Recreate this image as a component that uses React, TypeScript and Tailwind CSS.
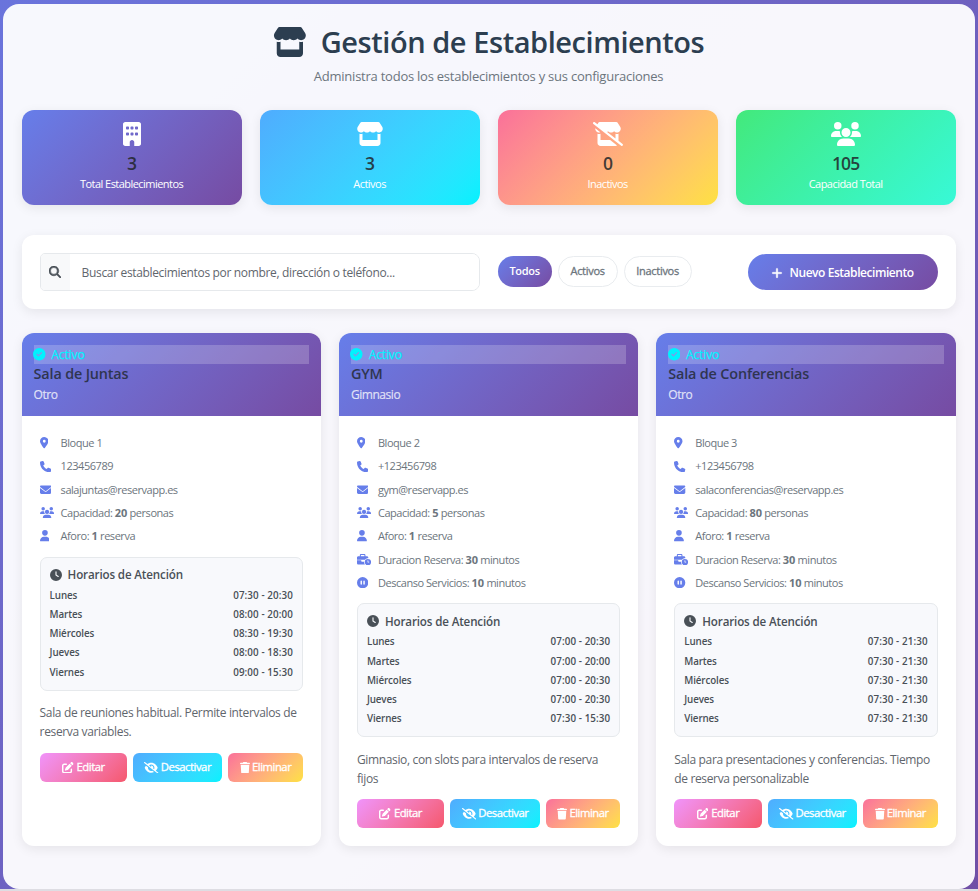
import type { ReactNode } from 'react';
import {
  FaBuilding,
  FaBusinessTime,
  FaCircleCheck,
  FaCirclePause,
  FaClock,
  FaEnvelope,
  FaEyeSlash,
  FaLocationDot,
  FaMagnifyingGlass,
  FaPenToSquare,
  FaPhone,
  FaPlus,
  FaStore,
  FaStoreSlash,
  FaTrash,
  FaUser,
  FaUsers,
} from 'react-icons/fa6';

type Place = {
  name: string;
  kind: string;
  address: string;
  phone: string;
  email: string;
  capacity: number;
  duration?: number;
  rest?: number;
  hours: [string, string][];
  description: string;
};

const places: Place[] = [
  {
    name: 'Sala de Juntas',
    kind: 'Otro',
    address: 'Bloque 1',
    phone: '123456789',
    email: 'salajuntas@reservapp.es',
    capacity: 20,
    hours: [
      ['Lunes', '07:30 - 20:30'],
      ['Martes', '08:00 - 20:00'],
      ['Miércoles', '08:30 - 19:30'],
      ['Jueves', '08:00 - 18:30'],
      ['Viernes', '09:00 - 15:30'],
    ],
    description: 'Sala de reuniones habitual. Permite intervalos de reserva variables.',
  },
  {
    name: 'GYM',
    kind: 'Gimnasio',
    address: 'Bloque 2',
    phone: '+123456798',
    email: 'gym@reservapp.es',
    capacity: 5,
    duration: 30,
    rest: 10,
    hours: [
      ['Lunes', '07:00 - 20:30'],
      ['Martes', '07:00 - 20:00'],
      ['Miércoles', '07:00 - 20:30'],
      ['Jueves', '07:00 - 20:30'],
      ['Viernes', '07:30 - 15:30'],
    ],
    description: 'Gimnasio, con slots para intervalos de reserva fijos',
  },
  {
    name: 'Sala de Conferencias',
    kind: 'Otro',
    address: 'Bloque 3',
    phone: '+123456798',
    email: 'salaconferencias@reservapp.es',
    capacity: 80,
    duration: 30,
    rest: 10,
    hours: [
      ['Lunes', '07:30 - 21:30'],
      ['Martes', '07:30 - 21:30'],
      ['Miércoles', '07:30 - 21:30'],
      ['Jueves', '07:30 - 21:30'],
      ['Viernes', '07:30 - 21:30'],
    ],
    description: 'Sala para presentaciones y conferencias. Tiempo de reserva personalizable',
  },
];

function Stat({ icon, value, label, tone }: { icon: ReactNode; value: string; label: string; tone: string }) {
  return (
    <div className={`flex h-[95px] flex-col items-center rounded-[12px] pt-3 text-white shadow-[0_3px_12px_rgba(0,0,0,0.08)] ${tone}`}>
      <div className="[&>svg]:h-6 [&>svg]:w-[30px]">{icon}</div>
      <div className="mt-[6px] text-[17.5px] font-semibold leading-[22px] tracking-[-0.9px] text-[#212529]/85">{value}</div>
      <div className="mt-[2px] text-[11px] leading-4 tracking-[-0.54px]">{label}</div>
    </div>
  );
}

function Detail({ icon, children }: { icon: ReactNode; children: ReactNode }) {
  return (
    <div className="flex h-[23.3px] items-center">
      <div className="w-[21px] shrink-0 text-[#667eea] [&>svg]:-mt-px [&>svg]:h-[11.3px]">{icon}</div>
      <div className="text-[11px] tracking-[-0.46px] text-[#6c757d] [&>strong]:tracking-[-0.1px]">{children}</div>
    </div>
  );
}

function Card({ place }: { place: Place }) {
  return (
    <article className="overflow-hidden rounded-[12px] bg-white shadow-[0_3px_12px_rgba(0,0,0,0.08)]">
      <header className="h-[83px] bg-linear-135 from-[#667eea] to-[#764ba2] p-3">
        <div className="flex h-[19px] items-center bg-white/20 text-[12px] text-[#00f2fe]">
          <FaCircleCheck className="-ml-[0.5px] text-[12.5px]" />
          <span className="ml-[6px] tracking-[-0.12px] [-webkit-text-stroke:0.25px]">Activo</span>
        </div>
        <h2 className="text-[14.4px] font-semibold leading-[19px] tracking-[-0.16px] text-[#2f3550]">{place.name}</h2>
        <p className="mt-[3px] text-[12px] leading-[18px] tracking-[-0.45px] text-white/75 [-webkit-text-stroke:0.2px]">{place.kind}</p>
      </header>
      <div className="px-[18px] pb-[18px] pt-[15.8px]">
        <Detail icon={<FaLocationDot className="w-[8.5px]" />}>{place.address}</Detail>
        <Detail icon={<FaPhone className="w-[11.3px]" />}>{place.phone}</Detail>
        <Detail icon={<FaEnvelope className="w-[11.3px]" />}>{place.email}</Detail>
        <Detail icon={<FaUsers className="w-[14.1px]" />}>
          Capacidad: <strong>{place.capacity}</strong> personas
        </Detail>
        <Detail icon={<FaUser className="w-[9.9px]" />}>
          Aforo: <strong>1</strong> reserva
        </Detail>
        {place.duration && (
          <Detail icon={<FaBusinessTime className="w-[14.1px]" />}>
            Duracion Reserva: <strong>{place.duration}</strong> minutos
          </Detail>
        )}
        {place.rest && (
          <Detail icon={<FaCirclePause className="w-[11.3px]" />}>
            Descanso Servicios: <strong>{place.rest}</strong> minutos
          </Detail>
        )}
        <section className="mt-[8.4px] h-[134px] rounded-[7px] border border-[#e6e9ec] bg-[#f8f9fc] px-[9px] pt-[8px] text-[#495057]">
          <h3 className="flex h-[18px] items-center font-semibold">
            <FaClock className="text-[12px]" />
            <span className="ml-[6px] text-[11.6px] tracking-[-0.14px]">Horarios de Atención</span>
          </h3>
          <div className="mt-[2.9px]">
            {place.hours.map(([day, time]) => (
              <div key={day} className="flex h-[19.2px] items-center justify-between text-[9.8px] font-semibold">
                <span className="tracking-[-0.12px]">{day}</span>
                <span className="tracking-[0.1px]">{time}</span>
              </div>
            ))}
          </div>
        </section>
        <p className="mt-[12.3px] text-[12px] leading-[19.2px] tracking-[-0.35px] text-[#5f666d]">{place.description}</p>
        <div className="mt-[11.4px] flex h-[29px] gap-[6px] text-[11.3px] tracking-[-0.48px] text-white [-webkit-text-stroke:0.3px] [&_svg]:h-[11.5px] [&_svg]:shrink-0">
          <button className="flex w-[87.5px] items-center justify-center gap-[3px] rounded-[6px] bg-linear-135 from-[#f093fb] to-[#f5576c]">
            <FaPenToSquare className="w-[11.5px]" />
            Editar
          </button>
          <button className="flex flex-1 items-center justify-center gap-[2px] rounded-[6px] bg-linear-135 from-[#4facfe] to-[#00f2fe]">
            <FaEyeSlash className="w-[14.4px]" />
            Desactivar
          </button>
          <button className="flex w-[74.5px] items-center justify-center gap-[2px] rounded-[6px] bg-linear-135 from-[#fa709a] to-[#fee140]">
            <FaTrash className="w-[10px]" />
            Eliminar
          </button>
        </div>
      </div>
    </article>
  );
}

export default function App() {
  return (
    <div className="h-[891px] w-[978px] overflow-hidden border-b-2 border-[#dedde3] bg-linear-135 from-[#6a74dc] to-[#704fa6] px-[3px] pt-1 font-['Open_Sans','Noto_Sans',sans-serif]">
      <main className="h-[885px] rounded-[16px] bg-white/95 pl-[18.6px] pr-[19.4px]">
        <h1 className="flex h-[76px] items-center justify-center gap-[14px] text-[29px] font-semibold tracking-[-0.44px] text-[#2c3e50]">
          <FaStore className="h-[30px] w-[33.75px]" />
          <span>Gestión de Establecimientos</span>
        </h1>
        <p className="-mt-[14px] text-center text-[13px] leading-5 tracking-[-0.24px] text-[#6c757d]">
          Administra todos los establecimientos y sus configuraciones
        </p>
        <div className="mt-6 grid grid-cols-4 gap-[18px]">
          <Stat icon={<FaBuilding />} value="3" label="Total Establecimientos" tone="bg-linear-135 from-[#667eea] to-[#764ba2]" />
          <Stat icon={<FaStore />} value="3" label="Activos" tone="bg-linear-135 from-[#4facfe] to-[#00f2fe]" />
          <Stat icon={<FaStoreSlash />} value="0" label="Inactivos" tone="bg-linear-135 from-[#fa709a] to-[#fee140]" />
          <Stat icon={<FaUsers />} value="105" label="Capacidad Total" tone="bg-linear-135 from-[#43e97b] to-[#38f9d7]" />
        </div>
        <div className="mt-[30px] flex h-[74px] items-center rounded-[12px] bg-white px-[18px] shadow-[0_3px_12px_rgba(0,0,0,0.08)]">
          <div className="flex h-[38px] w-[440px] overflow-hidden rounded-l-[5px] rounded-r-[8px] border border-[#e6e9ec]">
            <div className="flex w-[29px] items-center justify-center bg-[#f8f9fa] text-[12px] text-[#495057]">
              <FaMagnifyingGlass className="-mt-px stroke-current stroke-[24]" />
            </div>
            <input
              className="flex-1 bg-white px-3 pt-[2px] text-[12px] tracking-[-0.34px] outline-none placeholder:text-[#5f666d]"
              placeholder="Buscar establecimientos por nombre, dirección o teléfono..."
            />
          </div>
          <div className="-mt-px ml-[18px] flex h-[31px] gap-[6px] text-[11px] tracking-[-0.3px] text-[#6c757d]">
            <button className="w-[54px] rounded-full bg-linear-135 from-[#667eea] to-[#764ba2] font-semibold text-white">Todos</button>
            <button className="w-[60px] rounded-full border border-[#e9ecef] bg-white [-webkit-text-stroke:0.3px]">Activos</button>
            <button className="w-[68px] rounded-full border border-[#e9ecef] bg-white [-webkit-text-stroke:0.3px]">Inactivos</button>
          </div>
          <button className="ml-auto flex h-9 w-[190px] items-center justify-center gap-[6px] rounded-full bg-linear-135 from-[#667eea] to-[#764ba2] pt-px text-[12px] font-semibold tracking-[-0.44px] text-white">
            <FaPlus className="stroke-current stroke-[16]" />
            Nuevo Establecimiento
          </button>
        </div>
        <div className="mt-6 grid grid-cols-3 gap-[18px]">
          {places.map((place) => (
            <Card key={place.name} place={place} />
          ))}
        </div>
      </main>
    </div>
  );
}
